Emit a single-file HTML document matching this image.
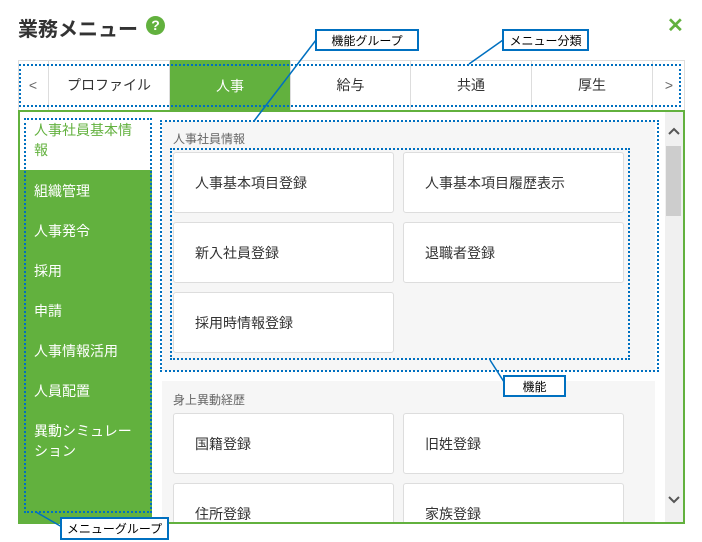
<!DOCTYPE html>
<html><head><meta charset="utf-8"><style>
*{box-sizing:border-box;margin:0;padding:0}
body{width:702px;height:542px;background:#fff;font-family:"Liberation Sans","Noto Sans CJK JP",sans-serif;position:relative;overflow:hidden;color:#333}
.a{position:absolute}
.tab{position:absolute;top:60px;height:50px;border-right:1px solid #ddd;font-size:14px;display:flex;align-items:center;justify-content:center;color:#333}
.card{position:absolute;width:221px;height:61px;background:#fff;border:1px solid #ddd;border-radius:3px;font-size:14px;padding-left:21px;display:flex;align-items:center;color:#333}
.dot{position:absolute;border:2px dotted #0070c0}
.call{position:absolute;border:2px solid #0070c0;background:#fff;font-size:12px;color:#000;display:flex;align-items:center;justify-content:center}
.side{position:absolute;left:34px;color:#fff;font-size:14px}
</style></head><body>
<div class="a" style="left:18px;top:13px;font-size:20px;font-weight:bold;color:#333">業務メニュー</div>
<div class="a" style="left:146px;top:16px;width:19px;height:19px;border-radius:50%;background:#62b13e;color:#fff;font-weight:bold;font-size:14px;text-align:center;line-height:19px">?</div>
<div class="a" style="left:667px;top:13px;color:#62b13e;font-size:20px;font-weight:bold">✕</div>

<div class="a" style="left:18px;top:60px;width:667px;height:51px;border:1px solid #ddd;border-bottom:none"></div>
<div class="tab" style="left:18px;width:31px;color:#666">&lt;</div>
<div class="tab" style="left:49px;width:121px">プロファイル</div>
<div class="tab" style="left:170px;width:121px;background:#62b13e;color:#fff;height:52px">人事</div>
<div class="tab" style="left:291px;width:120px">給与</div>
<div class="tab" style="left:411px;width:121px">共通</div>
<div class="tab" style="left:532px;width:121px">厚生</div>
<div class="tab" style="left:653px;width:32px;border:none;color:#666">&gt;</div>

<div class="a" style="left:18px;top:110px;width:667px;height:414px;border:2px solid #62b13e;background:#fff"></div>
<div class="a" style="left:20px;top:170px;width:132px;height:352px;background:#62b13e"></div>
<div class="a" style="left:34px;top:120px;width:110px;font-size:14px;color:#62b13e;line-height:20px">人事社員基本情<br>報</div>
<div class="side" style="top:181px">組織管理</div>
<div class="side" style="top:221px">人事発令</div>
<div class="side" style="top:261px">採用</div>
<div class="side" style="top:301px">申請</div>
<div class="side" style="top:341px">人事情報活用</div>
<div class="side" style="top:381px">人員配置</div>
<div class="side" style="top:421px;line-height:20px">異動シミュレー<br>ション</div>

<div class="a" style="left:665px;top:112px;width:18px;height:410px;background:#f0f0f0"></div>
<div class="a" style="left:666px;top:146px;width:15px;height:70px;background:#cdcdcd"></div>
<svg class="a" style="left:665px;top:112px" width="18" height="410"><g fill="none" stroke="#555" stroke-width="2"><path d="M4 22 L9 17 L14 22"/><path d="M4 385 L9 390 L14 385"/></g></svg>

<div class="a" style="left:152px;top:112px;width:513px;height:410px;overflow:hidden">
<div class="a" style="left:10px;top:9px;width:493px;height:250px;background:#f6f6f6"></div>
<div class="a" style="left:21px;top:18px;font-size:12px;color:#666">人事社員情報</div>
<div class="card" style="left:21px;top:40px">人事基本項目登録</div>
<div class="card" style="left:251px;top:40px">人事基本項目履歴表示</div>
<div class="card" style="left:21px;top:110px">新入社員登録</div>
<div class="card" style="left:251px;top:110px">退職者登録</div>
<div class="card" style="left:21px;top:180px">採用時情報登録</div>
<div class="a" style="left:10px;top:269px;width:493px;height:160px;background:#f6f6f6"></div>
<div class="a" style="left:21px;top:279px;font-size:12px;color:#666">身上異動経歴</div>
<div class="card" style="left:21px;top:301px">国籍登録</div>
<div class="card" style="left:251px;top:301px">旧姓登録</div>
<div class="card" style="left:21px;top:371px">住所登録</div>
<div class="card" style="left:251px;top:371px">家族登録</div>
</div>

<div class="dot" style="left:19px;top:64px;width:662px;height:43px"></div>
<div class="dot" style="left:24px;top:118px;width:128px;height:395px"></div>
<div class="dot" style="left:160px;top:120px;width:499px;height:252px"></div>
<div class="dot" style="left:170px;top:148px;width:460px;height:212px"></div>

<svg class="a" style="left:0;top:0" width="702" height="542"><g stroke="#0070c0" stroke-width="1.5">
<line x1="316" y1="40" x2="254" y2="121"/><line x1="503" y1="40" x2="469" y2="64"/>
<line x1="490" y1="360" x2="506" y2="385"/><line x1="36" y1="512" x2="62" y2="527"/></g></svg>
<div class="call" style="left:315px;top:29px;width:104px;height:22px">機能グループ</div>
<div class="call" style="left:502px;top:29px;width:87px;height:22px">メニュー分類</div>
<div class="call" style="left:503px;top:375px;width:63px;height:22px">機能</div>
<div class="call" style="left:60px;top:517px;width:109px;height:23px">メニューグループ</div>
</body></html>
